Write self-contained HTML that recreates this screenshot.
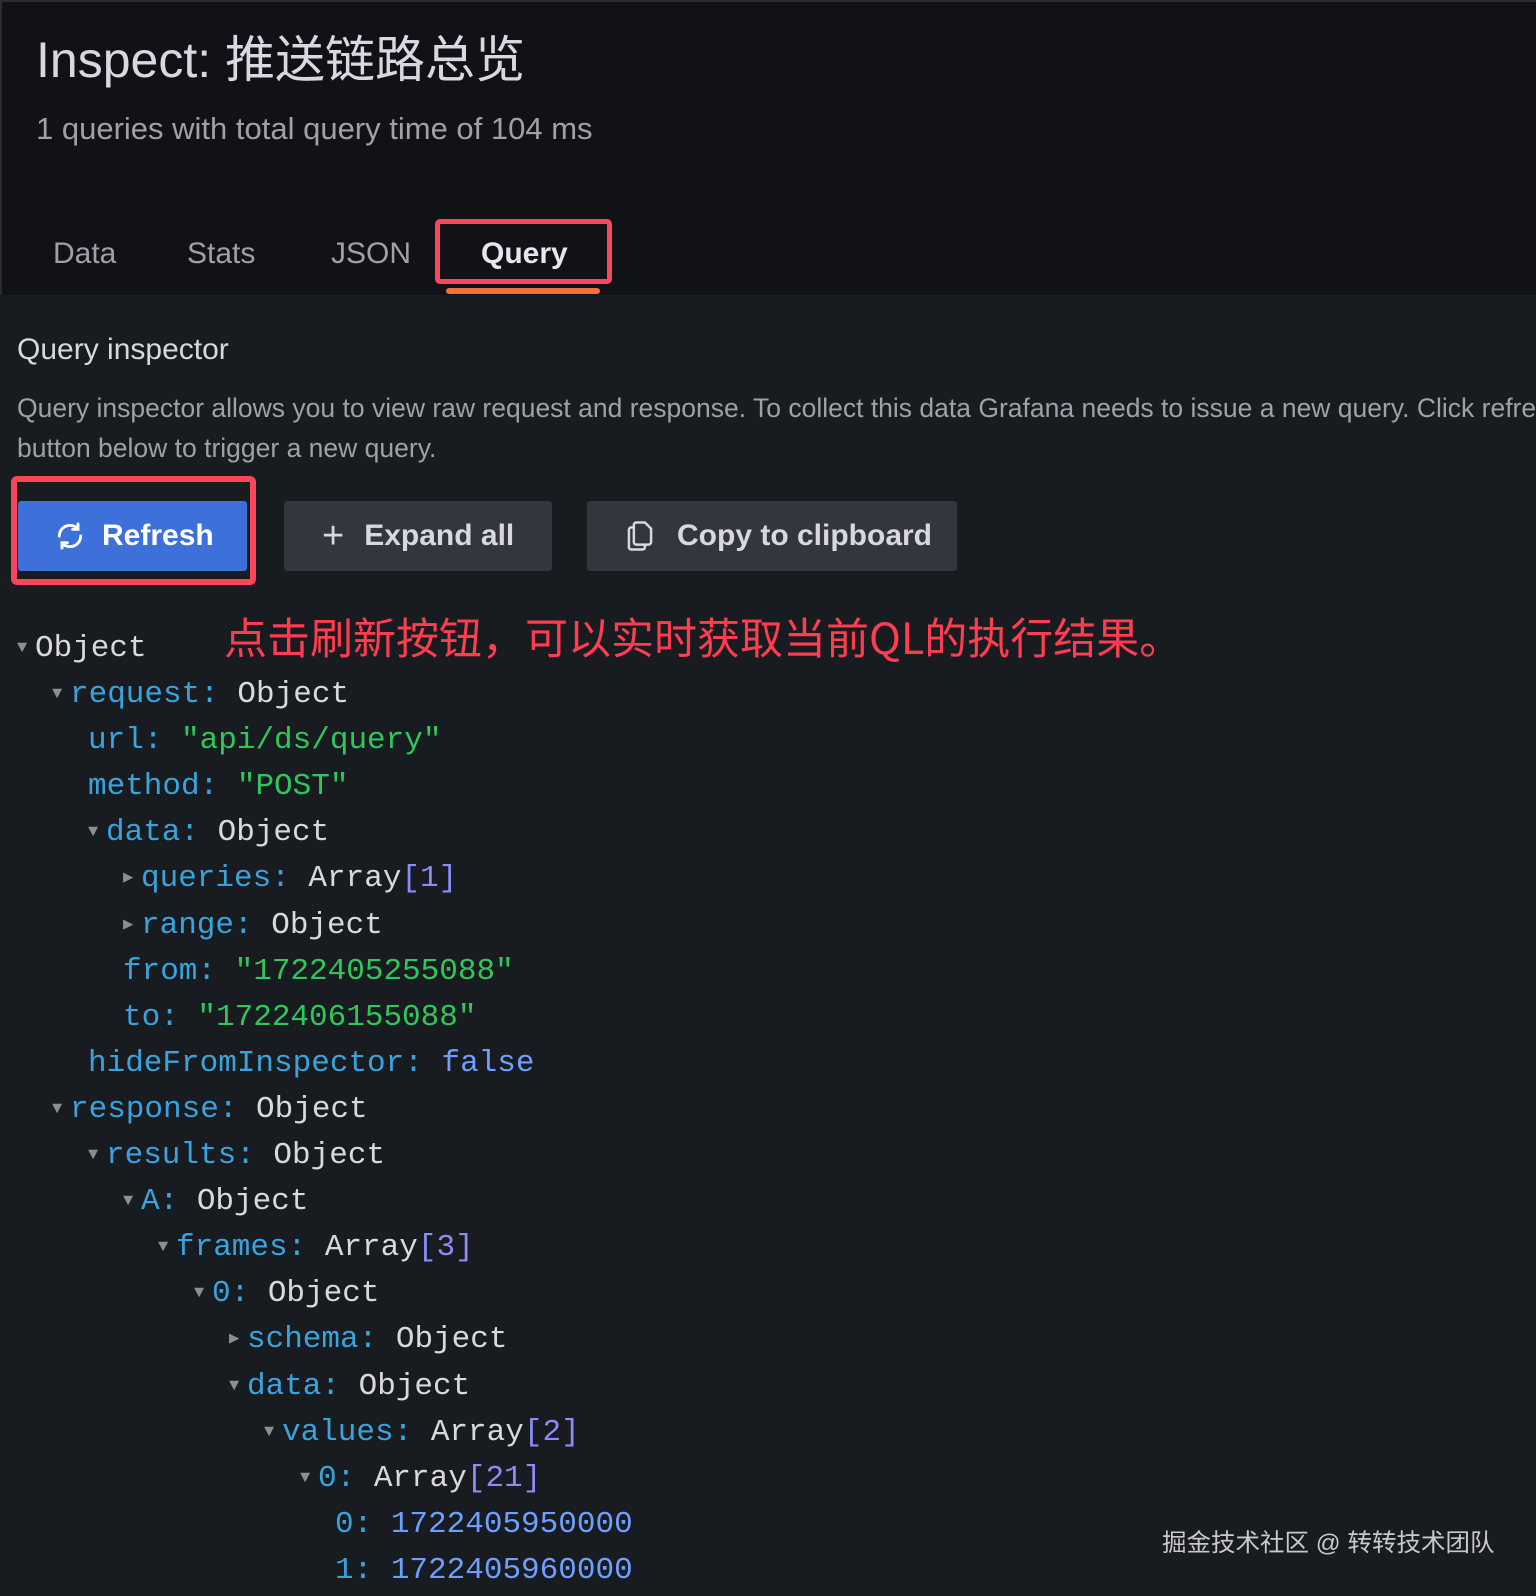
<!DOCTYPE html>
<html><head><meta charset="utf-8"><style>
*{margin:0;padding:0;box-sizing:border-box}
body{width:1536px;height:1596px;background:#181b1f;position:relative;overflow:hidden;font-family:"Liberation Sans","Noto Sans CJK SC",sans-serif;color:#ccccdc}
.hdr{position:absolute;left:0;top:0;width:1536px;height:295px;background:#111217;border-top:2px solid #2a2c31;border-left:2px solid #2a2c31}
.a{position:absolute;white-space:nowrap}
.tab{position:absolute;top:237px;font-size:30px;color:#9fa1a8}
.btn{position:absolute;top:501px;height:70px;border-radius:3px;font-size:30px;font-weight:bold;display:flex;align-items:center;color:#d8d9e0}
.tree{position:absolute;left:0;top:626px;font-family:"Liberation Mono","DejaVu Sans Mono",monospace;font-size:31px;line-height:46.1px;color:#d8d9e0}
.tree div{white-space:nowrap;position:relative}
.t{display:inline-block;width:18px;color:#8e8e8e;font-size:17px;vertical-align:4px}
.k{color:#3aa3dc}.s{color:#2fc75a}.n{color:#6e9fff}.b{color:#8b8cf6}
</style></head><body>
<div class="hdr"></div>
<div class="a" style="left:36px;top:20px;font-size:50px;color:#d8d9e0">Inspect: 推送链路总览</div>
<div class="a" style="left:36px;top:111px;font-size:31px;color:#9fa1a8">1 queries with total query time of 104 ms</div>
<div class="tab" style="left:53px">Data</div>
<div class="tab" style="left:187px">Stats</div>
<div class="tab" style="left:331px">JSON</div>
<div class="tab" style="left:481px;color:#e6e7ee;font-weight:bold">Query</div>
<div class="a" style="left:435px;top:219px;width:177px;height:65px;border:5px solid #f8475b;border-radius:5px"></div>
<div class="a" style="left:446px;top:288px;width:154px;height:6px;background:#f0733a;border-radius:3px"></div>
<div class="a" style="left:17px;top:333px;font-size:30px;color:#d8d9e0">Query inspector</div>
<div class="a" style="left:17px;top:388px;font-size:26.5px;color:#9fa1a8;line-height:40px">Query inspector allows you to view raw request and response. To collect this data Grafana needs to issue a new query. Click refresh<br>button below to trigger a new query.</div>
<div class="btn" style="left:18px;width:229px;background:#3d71d9;color:#fff;padding-left:36px">
<svg width="32" height="32" viewBox="0 0 24 24" fill="none" stroke="#fff" stroke-width="2.2" stroke-linecap="round"><path d="M4 12a8 8 0 0 1 14-5.3M20 12a8 8 0 0 1-14 5.3"/><path d="M18 3v4h-4M6 21v-4h4"/></svg>
<span style="margin-left:16px">Refresh</span></div>
<div class="a" style="left:11px;top:476px;width:245px;height:109px;border:6px solid #f8475b;border-radius:6px"></div>
<div class="btn" style="left:284px;width:268px;background:#33363d;padding-left:38px"><span style="font-weight:normal;font-size:38px;margin-right:20px">+</span>Expand all</div>
<div class="btn" style="left:587px;width:370px;background:#33363d;padding-left:38px">
<svg width="30" height="32" viewBox="0 0 24 26" fill="none" stroke="#d8d9e0" stroke-width="2"><path d="M9 2h7l5 5v11a2 2 0 0 1-2 2h-10a2 2 0 0 1-2-2V4a2 2 0 0 1 2-2z"/><path d="M7 6h-2a2 2 0 0 0-2 2v14a2 2 0 0 0 2 2h9a2 2 0 0 0 2-2v-2"/></svg>
<span style="margin-left:22px">Copy to clipboard</span></div>
<div class="a" style="left:224px;top:605px;font-size:43px;color:#ff3d50;font-family:'Noto Sans CJK SC','Liberation Sans',sans-serif">点击刷新按钮，可以实时获取当前QL的执行结果。</div>
<div class="tree">
<div style="left:17px"><span class="t">▼</span>Object</div>
<div style="left:52px"><span class="t">▼</span><span class="k">request:</span> Object</div>
<div style="left:88px"><span class="k">url:</span> <span class="s">"api/ds/query"</span></div>
<div style="left:88px"><span class="k">method:</span> <span class="s">"POST"</span></div>
<div style="left:88px"><span class="t">▼</span><span class="k">data:</span> Object</div>
<div style="left:123px"><span class="t">▶</span><span class="k">queries:</span> Array<span class="b">[1]</span></div>
<div style="left:123px"><span class="t">▶</span><span class="k">range:</span> Object</div>
<div style="left:123px"><span class="k">from:</span> <span class="s">"1722405255088"</span></div>
<div style="left:123px"><span class="k">to:</span> <span class="s">"1722406155088"</span></div>
<div style="left:88px"><span class="k">hideFromInspector:</span> <span class="n">false</span></div>
<div style="left:52px"><span class="t">▼</span><span class="k">response:</span> Object</div>
<div style="left:88px"><span class="t">▼</span><span class="k">results:</span> Object</div>
<div style="left:123px"><span class="t">▼</span><span class="k">A:</span> Object</div>
<div style="left:158px"><span class="t">▼</span><span class="k">frames:</span> Array<span class="b">[3]</span></div>
<div style="left:194px"><span class="t">▼</span><span class="k">0:</span> Object</div>
<div style="left:229px"><span class="t">▶</span><span class="k">schema:</span> Object</div>
<div style="left:229px"><span class="t">▼</span><span class="k">data:</span> Object</div>
<div style="left:264px"><span class="t">▼</span><span class="k">values:</span> Array<span class="b">[2]</span></div>
<div style="left:300px"><span class="t">▼</span><span class="k">0:</span> Array<span class="b">[21]</span></div>
<div style="left:335px"><span class="k">0:</span> <span class="n">1722405950000</span></div>
<div style="left:335px"><span class="k">1:</span> <span class="n">1722405960000</span></div>
</div>
<div class="a" style="left:1162px;top:1524px;font-size:24.5px;color:#c8c9cf">掘金技术社区 @ 转转技术团队</div>
</body></html>
